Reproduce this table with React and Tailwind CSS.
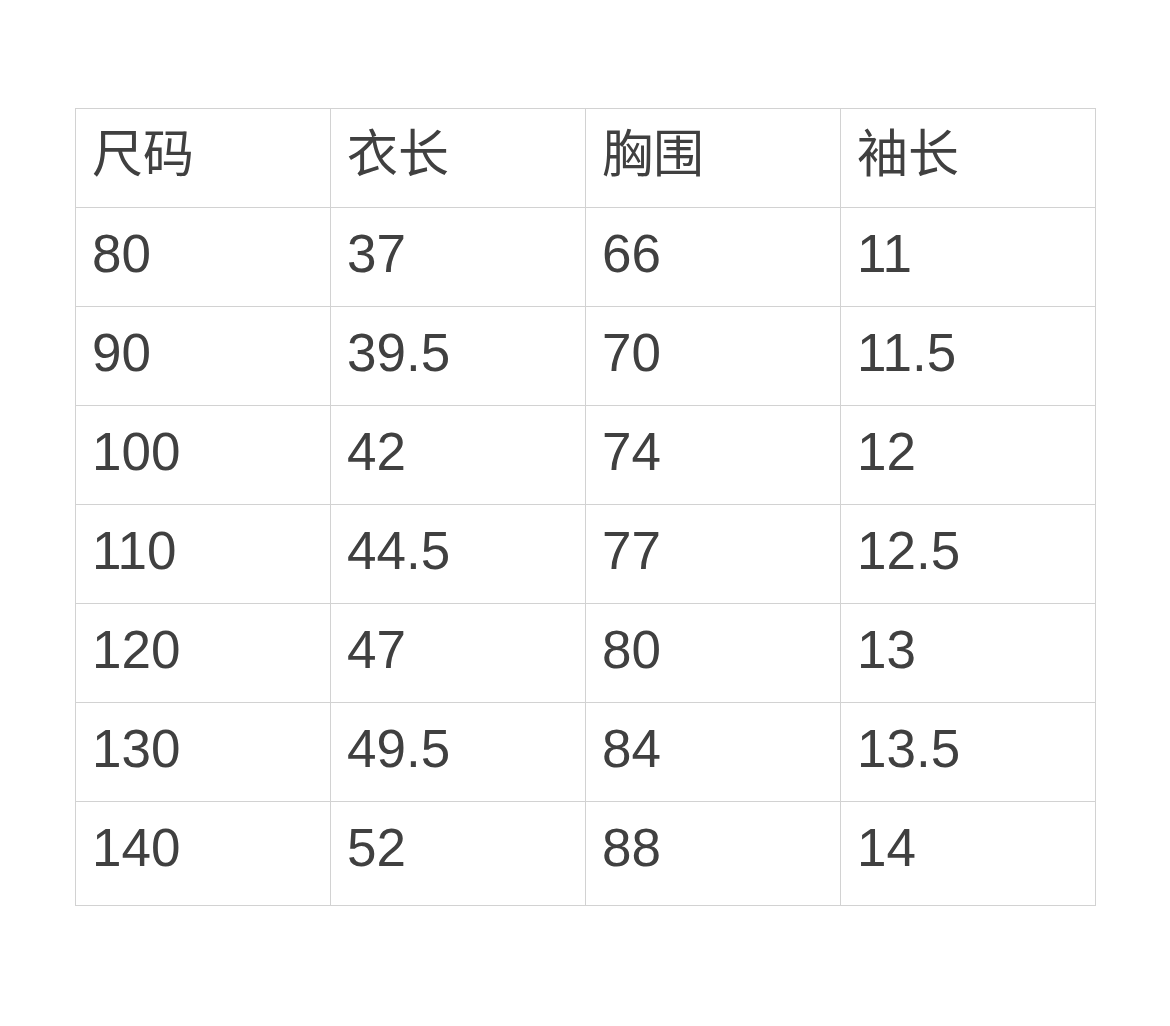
const headers = ["尺码", "衣长", "胸围", "袖长"];

const rows = [
  ["80", "37", "66", "11"],
  ["90", "39.5", "70", "11.5"],
  ["100", "42", "74", "12"],
  ["110", "44.5", "77", "12.5"],
  ["120", "47", "80", "13"],
  ["130", "49.5", "84", "13.5"],
  ["140", "52", "88", "14"],
];

export default function App() {
  return (
    <div
      className="min-h-[1026px] w-[1170px] bg-white pt-[108px] pl-[75px]"
      style={{ fontFamily: '"Liberation Sans", "Noto Sans CJK SC", sans-serif' }}
    >
      <table className="w-[1020px] table-fixed border-collapse text-[#404040]">
        <thead>
          <tr>
            {headers.map((h) => (
              <th
                key={h}
                className="h-[99px] w-[255px] border border-[#d2d2d2] pl-4 pb-2 text-left align-middle text-[51px] font-normal leading-none"
              >
                {h}
              </th>
            ))}
          </tr>
        </thead>
        <tbody>
          {rows.map((r, i) => (
            <tr key={r[0]}>
              {r.map((c, j) => (
                <td
                  key={j}
                  className={`${i === rows.length - 1 ? "h-[104px] pb-3" : "h-[99px] pb-2"} border border-[#d2d2d2] pl-4 align-middle text-[53px] leading-none`}
                >
                  {c}
                </td>
              ))}
            </tr>
          ))}
        </tbody>
      </table>
    </div>
  );
}
